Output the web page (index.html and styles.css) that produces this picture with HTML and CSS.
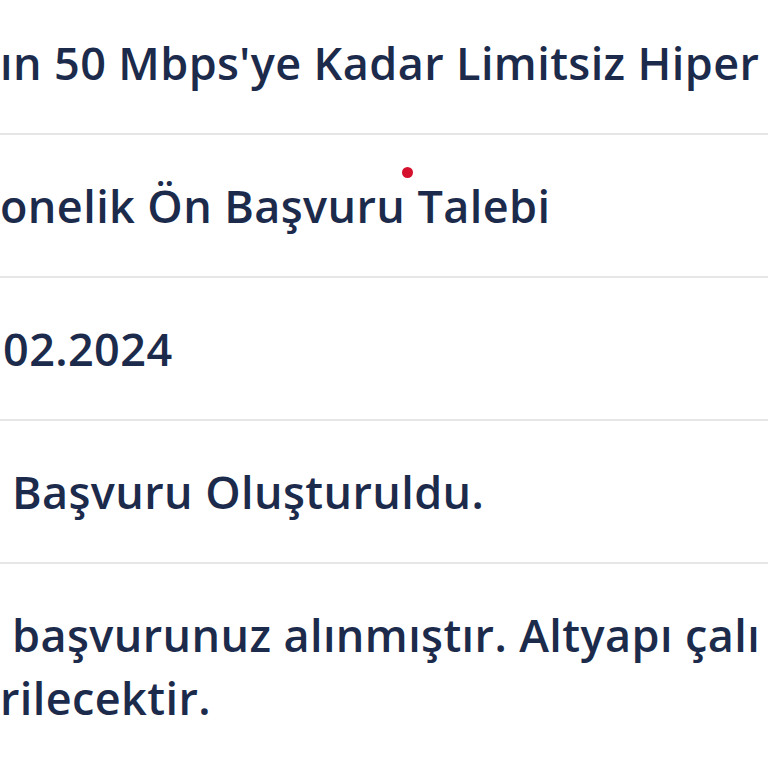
FILE: index.html
```html
<!DOCTYPE html>
<html lang="tr">
<head>
<meta charset="utf-8">
<title>Başvuru Detayı</title>
<link rel="stylesheet" href="styles.css">
</head>
<body>
<div class="table">
  <div class="row"><span class="cell">ın 50 Mbps'ye Kadar Limitsiz Hiper</span></div>
  <div class="row"><span class="cell">onelik Ön Başvuru Talebi</span></div>
  <div class="row"><span class="cell ind-s">02.2024</span></div>
  <div class="row"><span class="cell ind-m">Başvuru Oluşturuldu.</span></div>
  <div class="row last"><span class="cell ind-m">başvurunuz alınmıştır. Altyapı çalı</span><span class="cell">rilecektir.</span></div>
</div>
<span class="dot"></span>
</body>
</html>
```
FILE: styles.css
```css
html, body {
  margin: 0;
  padding: 0;
  background: #ffffff;
  overflow: hidden;
  width: 768px;
  height: 768px;
  position: relative;
}
.table {
  margin-top: -8px;
  font-family: "Open Sans", "Noto Sans", sans-serif;
  font-weight: 600;
  font-size: 45px;
  letter-spacing: 0.4px;
  line-height: 63px;
  color: #1c2b4b;
}
.row {
  padding: 39px 0 39px 0;
  border-bottom: 2px solid #e6e6e6;
  white-space: nowrap;
  overflow: hidden;
}
.row.last {
  border-bottom: none;
}
.cell {
  display: block;
}
.ind-s {
  padding-left: 3px;
}
.ind-m {
  padding-left: 12px;
}
.dot {
  position: absolute;
  left: 402px;
  top: 167px;
  width: 11px;
  height: 11px;
  border-radius: 50%;
  background: #d4102c;
}
```
